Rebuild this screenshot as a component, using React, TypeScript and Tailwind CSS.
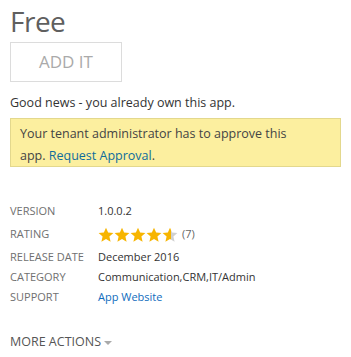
import React from "react";

const Star = ({ fill }: { fill: "full" | "half" }) => (
  <svg width="16" height="16" viewBox="0 0 24 24" className="block">
    <defs>
      <linearGradient id="half">
        <stop offset="55%" stopColor="#f7b500" />
        <stop offset="55%" stopColor="#d0d0d0" />
      </linearGradient>
    </defs>
    <path
      d="M12 1l3.2 7.3 7.9.7-6 5.3 1.8 7.8L12 18l-6.9 4.1 1.8-7.8-6-5.3 7.9-.7z"
      fill={fill === "full" ? "#f7b500" : "url(#half)"}
    />
  </svg>
);

const rows: { label: string; value: React.ReactNode; tall?: boolean }[] = [
  { label: "VERSION", value: "1.0.0.2" },
  {
    label: "RATING",
    tall: true,
    value: (
      <span className="flex items-center">
        <span className="flex">
          <Star fill="full" />
          <Star fill="full" />
          <Star fill="full" />
          <Star fill="full" />
          <Star fill="half" />
        </span>
        <span className="ml-[4px] text-[#666]">(7)</span>
      </span>
    ),
  },
  { label: "RELEASE DATE", value: "December 2016" },
  { label: "CATEGORY", value: "Communication,CRM,IT/Admin" },
  { label: "SUPPORT", value: <span className="text-[#0f6cbd]">App Website</span> },
];

export default function App() {
  return (
    <div
      className="w-[351px] h-[357px] bg-white px-[10px] overflow-hidden"
      style={{ fontFamily: '"Open Sans", "Noto Sans", sans-serif' }}
    >
      <div className="pt-[3px] text-[28px] leading-[36px] text-[#5f5f5f] tracking-[-0.5px]">Free</div>
      <div className="mt-[3px] w-[112px] h-[40px] border border-[#dcdcdc] flex items-center justify-center text-[17px] text-[#aaaaaa]">
        ADD IT
      </div>
      <div className="mt-[12px] text-[12.5px] leading-[17px] text-[#333]">
        Good news - you already own this app.
      </div>
      <div className="mt-[7px] w-[331px] h-[49px] bg-[#fcef9f] border border-[#e3d88d] pl-[9px] pt-[4px] text-[12.5px] leading-[22px] text-[#444]">
        Your tenant administrator has to approve this
        <br />
        app. <span className="text-[#0f6c9c]">Request Approval</span>.
      </div>
      <div className="mt-[36px] flex flex-col gap-[3px] text-[11px]">
        {rows.map((r) => (
          <div key={r.label} className={`flex items-center ${r.tall ? "h-[23px]" : "h-[17px]"}`}>
            <div className="w-[88px] text-[#707070] text-[11px]">{r.label}</div>
            <div className="text-[#333]">{r.value}</div>
          </div>
        ))}
      </div>
      <div className="mt-[27px] flex items-center text-[12.5px] text-[#555]">
        MORE ACTIONS
        <svg width="8" height="5" viewBox="0 0 8 5" className="ml-[3px] mt-[2px]">
          <path d="M0 0h8L4 4z" fill="#aaa" />
        </svg>
      </div>
    </div>
  );
}
